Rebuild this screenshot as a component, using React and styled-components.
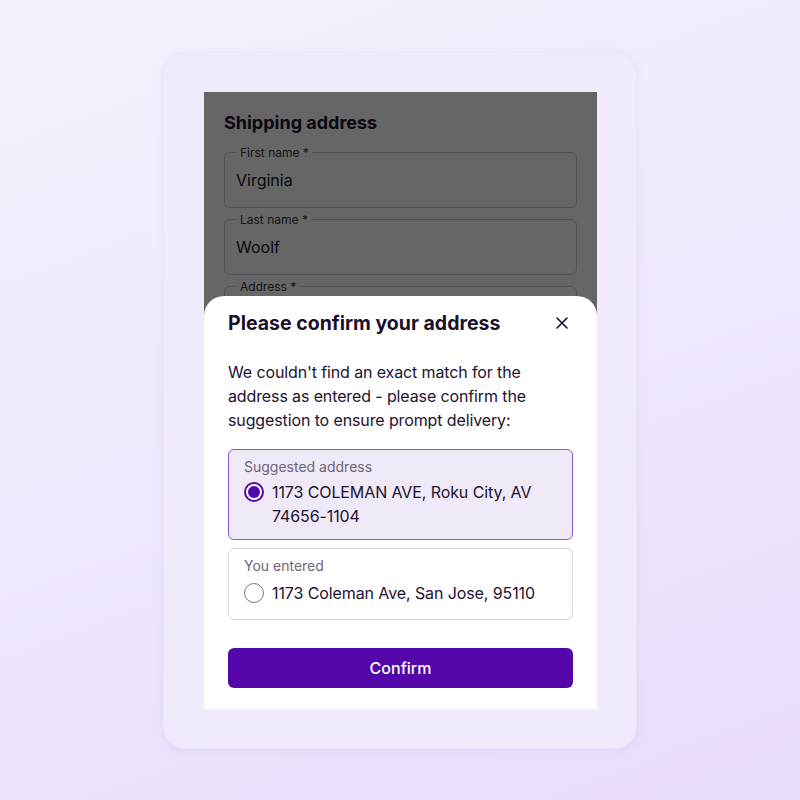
import React, { useState } from 'react';
import styled, { createGlobalStyle } from 'styled-components';

const GlobalStyle = createGlobalStyle`
  html, body {
    margin: 0;
    padding: 0;
  }
  body {
    font-family: Inter, "Noto Sans", sans-serif;
    color: #1d1230;
  }
  * {
    box-sizing: border-box;
  }
`;

const Page = styled.div`
  width: 800px;
  height: 800px;
  display: flex;
  align-items: center;
  justify-content: center;
  background: linear-gradient(160deg, #f5f1fd 0%, #efe7fc 55%, #e8dcfb 100%);
`;

const Device = styled.div`
  width: 474px;
  height: 697px;
  padding: 39px 40px 39px 40px;
  border-radius: 22px;
  background: #f1eafd;
  border: 1px solid #ece4f8;
  box-shadow: 0 2px 10px rgba(120, 90, 180, 0.08);
`;

const Screen = styled.div`
  position: relative;
  width: 393px;
  height: 617px;
  overflow: hidden;
  background: #ffffff;
`;

const Form = styled.div`
  padding: 19px 20px 0 20px;
  display: flex;
  flex-direction: column;
`;

const FormTitle = styled.h2`
  margin: 0 0 11px 0;
  font-size: 18px;
  line-height: 24px;
  font-weight: 700;
`;

const Fields = styled.div`
  display: flex;
  flex-direction: column;
  gap: 5px;
`;

const Field = styled.fieldset`
  margin: 0;
  padding: 0 12px 15px 12px;
  border: 1px solid #d2cad9;
  border-radius: 6px;
  min-width: 0;
`;

const Legend = styled.legend`
  padding: 0 3px;
  font-size: 12px;
  line-height: 14px;
  color: #3a3340;
`;

const FieldValue = styled.div`
  margin: 8px 0 0 -1px;
  font-size: 16px;
  line-height: 24px;
`;

const Shade = styled.div`
  position: absolute;
  inset: 0;
  background: rgba(0, 0, 0, 0.6);
`;

const Sheet = styled.div`
  position: absolute;
  left: 0;
  right: 0;
  bottom: 0;
  height: 413px;
  background: #ffffff;
  border-radius: 20px 20px 0 0;
  padding: 15px 24px 20px 24px;
  display: flex;
  flex-direction: column;
`;

const SheetHeader = styled.div`
  display: flex;
  align-items: center;
  justify-content: space-between;
`;

const SheetTitle = styled.h3`
  margin: 0;
  font-size: 19.5px;
  line-height: 24px;
  font-weight: 700;
  color: #1b1029;
`;

const CloseButton = styled.button`
  border: none;
  background: none;
  padding: 0;
  width: 20px;
  height: 20px;
  margin-right: 1px;
  display: flex;
  align-items: center;
  justify-content: center;
  cursor: pointer;
  color: #1b1029;
`;

const Message = styled.p`
  margin: 25px 0 17px 0;
  font-size: 16px;
  line-height: 24px;
  letter-spacing: -0.12px;
  color: #1d1230;
`;

const Options = styled.div`
  display: flex;
  flex-direction: column;
  gap: 8px;
`;

const Option = styled.label`
  display: block;
  padding: 8px 15px 11px 15px;
  border-radius: 6px;
  border: 1px solid ${(p) => (p.$selected ? '#8b5bd4' : '#dcd4e4')};
  background: ${(p) => (p.$selected ? '#f0e9f7' : '#ffffff')};
  cursor: pointer;
`;

const OptionLabel = styled.div`
  font-size: 14px;
  line-height: 18px;
  color: #6d6675;
`;

const OptionRow = styled.div`
  display: flex;
  align-items: flex-start;
  gap: 8px;
  margin-top: 4px;
  min-height: 29px;
  padding-top: ${(p) => (p.$single ? '2px' : '0')};
`;

const Radio = styled.span`
  flex: none;
  width: 20px;
  height: 20px;
  margin-top: 2px;
  border-radius: 50%;
  border: ${(p) => (p.$checked ? '2px solid #5406ab' : '1px solid #7b7383')};
  background: #ffffff;
  display: flex;
  align-items: center;
  justify-content: center;

  &::after {
    content: '';
    width: 12px;
    height: 12px;
    border-radius: 50%;
    background: #5406ab;
    display: ${(p) => (p.$checked ? 'block' : 'none')};
  }
`;

const OptionText = styled.div`
  font-size: 16px;
  line-height: 24px;
  letter-spacing: -0.1px;
  color: #1d1230;
`;

const ConfirmButton = styled.button`
  margin-top: 28px;
  height: 40px;
  width: 100%;
  border: none;
  border-radius: 6px;
  background: #5406ab;
  color: #ffffff;
  font-family: Inter, "Noto Sans", sans-serif;
  font-size: 16px;
  font-weight: 500;
  cursor: pointer;
`;

const fields = [
  { label: 'First name', value: 'Virginia' },
  { label: 'Last name', value: 'Woolf' },
  { label: 'Address', value: '1173 Coleman Ave' },
];

const options = [
  { id: 'suggested', label: 'Suggested address', text: '1173 COLEMAN AVE, Roku City, AV 74656-1104' },
  { id: 'entered', label: 'You entered', text: '1173 Coleman Ave, San Jose, 95110', single: true },
];

function App() {
  const [choice, setChoice] = useState('suggested');

  return (
    <Page>
      <GlobalStyle />
      <Device>
        <Screen>
          <Form>
            <FormTitle>Shipping address</FormTitle>
            <Fields>
              {fields.map((f) => (
                <Field key={f.label}>
                  <Legend>{f.label} *</Legend>
                  <FieldValue>{f.value}</FieldValue>
                </Field>
              ))}
            </Fields>
          </Form>
          <Shade />
          <Sheet>
            <SheetHeader>
              <SheetTitle>Please confirm your address</SheetTitle>
              <CloseButton aria-label="Close">
                <svg width="12" height="12" viewBox="0 0 12 12">
                  <path d="M1 1 L11 11 M11 1 L1 11" stroke="currentColor" strokeWidth="1.6" strokeLinecap="round" />
                </svg>
              </CloseButton>
            </SheetHeader>
            <Message>
              We couldn't find an exact match for the address as entered - please confirm the suggestion to ensure prompt delivery:
            </Message>
            <Options>
              {options.map((o) => (
                <Option key={o.id} $selected={choice === o.id} onClick={() => setChoice(o.id)}>
                  <OptionLabel>{o.label}</OptionLabel>
                  <OptionRow $single={o.single}>
                    <Radio $checked={choice === o.id} />
                    <OptionText>{o.text}</OptionText>
                  </OptionRow>
                </Option>
              ))}
            </Options>
            <ConfirmButton>Confirm</ConfirmButton>
          </Sheet>
        </Screen>
      </Device>
    </Page>
  );
}

export default App;
